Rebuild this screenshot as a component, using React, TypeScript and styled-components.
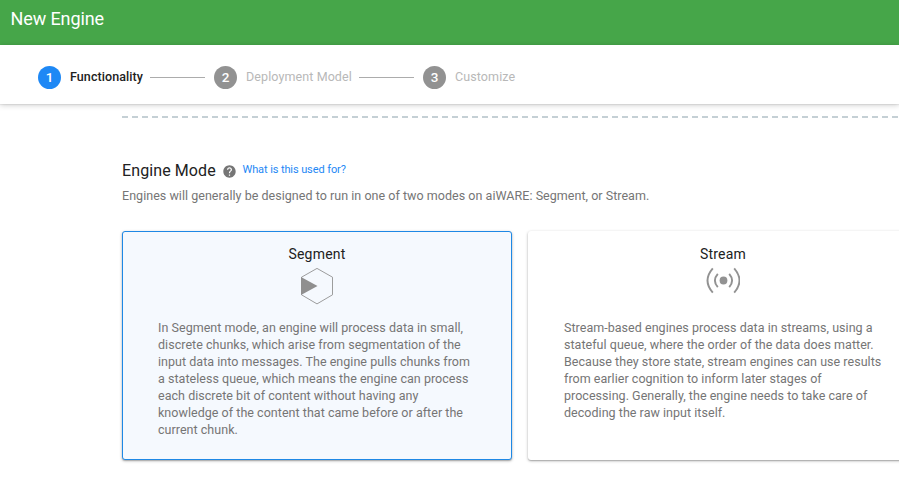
import React from "react";
import styled, { createGlobalStyle } from "styled-components";

const GlobalStyle = createGlobalStyle`
  *, *::before, *::after { box-sizing: border-box; }
  body { margin: 0; background: #fff; font-family: Roboto, "Liberation Sans", sans-serif; }
`;

const Page = styled.div`
  width: 100%;
  height: 478px;
  overflow: hidden;
  display: flex;
  flex-direction: column;
`;

const Header = styled.header`
  flex: none;
  height: 45px;
  padding: 8px 0 0 10.5px;
  background: #46a649;
  color: #fff;
  font-size: 18px;
  line-height: 22px;
  letter-spacing: -0.1px;
`;

const Stepper = styled.nav`
  flex: none;
  height: 59px;
  padding: 5px 0 0 38px;
  display: flex;
  align-items: center;
  background: #fff;
  box-shadow: 0 1px 6px rgba(0, 0, 0, 0.2), 0 1px 1px rgba(0, 0, 0, 0.06);
`;

const StepBadge = styled.span<{ $active?: boolean }>`
  width: 23px;
  height: 23px;
  border-radius: 50%;
  display: grid;
  place-items: center;
  background: ${(p) => (p.$active ? "#1e88f5" : "#929292")};
  color: #fff;
  font-size: 13.5px;
  font-weight: 500;
  line-height: 23px;
`;

const StepLabel = styled.span<{ $active?: boolean; $width: number }>`
  width: ${(p) => p.$width}px;
  margin-left: 9px;
  white-space: nowrap;
  color: ${(p) => (p.$active ? "#212121" : "#b8b8b8")};
  font-size: 12.5px;
  font-weight: ${(p) => (p.$active ? 500 : 400)};
  line-height: 16px;
  letter-spacing: ${(p) => (p.$active ? 0.08 : 0.1)}px;
`;

const StepLine = styled.span`
  width: 55px;
  height: 1px;
  margin: 0 9px 0 7px;
  background: #acacac;
`;

const Content = styled.main`
  padding: 12px 0 0 122px;
`;

const Divider = styled.div`
  height: 2px;
  background: repeating-linear-gradient(90deg, #c5d0d5 0 6px, transparent 6px 10px);
`;

const TitleRow = styled.div`
  display: flex;
  align-items: center;
  height: 22px;
  margin-top: 42px;
`;

const Title = styled.h1`
  width: 100.5px;
  margin: 0;
  white-space: nowrap;
  font-size: 16px;
  font-weight: 400;
  line-height: 22px;
  letter-spacing: 0.1px;
  color: #212121;
`;

const HelpLink = styled.a`
  margin: -2px 0 0 7px;
  font-size: 11px;
  line-height: 16px;
  letter-spacing: -0.1px;
  color: #1e88f5;
`;

const Intro = styled.p`
  margin: 5px 0 0;
  font-size: 12.5px;
  line-height: 17px;
  color: #757575;
  letter-spacing: 0.035px;
  white-space: nowrap;
`;

const Cards = styled.div`
  display: flex;
  gap: 16px;
  margin-top: 27px;
`;

const Card = styled.section<{ $selected?: boolean }>`
  flex: none;
  width: 390px;
  height: 229px;
  padding: 13px 35px 0;
  border: 1px solid ${(p) => (p.$selected ? "#1e88e5" : "transparent")};
  border-radius: 3px;
  background: ${(p) => (p.$selected ? "#f5f9fe" : "#fff")};
  box-shadow: 0 1px 3px rgba(0, 0, 0, 0.3), 0 1px 1px rgba(0, 0, 0, 0.14);
`;

const CardTitle = styled.h2`
  margin: 0;
  text-align: center;
  font-size: 14px;
  font-weight: 400;
  line-height: 18px;
  letter-spacing: 0.2px;
  color: #212121;
`;

const IconSlot = styled.div`
  height: 56px;
  display: flex;
  justify-content: center;
  align-items: flex-start;
`;

const CardText = styled.p`
  margin: 0;
  white-space: pre;
  font-size: 12.5px;
  line-height: 17px;
  letter-spacing: 0.035px;
  color: #757575;
`;

const HelpIcon = () => (
  <svg width="13" height="13" viewBox="1.5 1.5 21 21" fill="#757575">
    <path d="M12 2C6.48 2 2 6.48 2 12s4.48 10 10 10 10-4.48 10-10S17.52 2 12 2zm1 17h-2v-2h2v2zm2.07-7.75l-.9.92C13.45 12.9 13 13.5 13 15h-2v-.5c0-1.1.45-2.1 1.17-2.83l1.24-1.26c.37-.36.59-.86.59-1.41 0-1.1-.9-2-2-2s-2 .9-2 2H8c0-2.21 1.79-4 4-4s4 1.79 4 4c0 .88-.36 1.68-.93 2.25z" />
  </svg>
);

const SegmentIcon = () => (
  <svg width="34" height="42" viewBox="0 0 34 42">
    <path d="M17 5.4 32.5 14.2V31.8L17 40.9 1.5 31.8V14.2Z" fill="none" stroke="#929292" strokeWidth=".9" />
    <path d="M1 14V32L17.5 23Z" fill="#8f8f8f" />
  </svg>
);

const StreamIcon = () => (
  <svg width="34" height="40" viewBox="0 0 34 40" fill="none" stroke="#929292" strokeWidth="1.9">
    <circle cx="17.5" cy="17.5" r="3.9" fill="#929292" stroke="none" />
    <path d="M6.8 5.3Q-3.8 17.5 6.8 29.7M28.2 5.3Q38.8 17.5 28.2 29.7M11.8 10.8Q6 17.5 11.8 24.2M23.2 10.8Q29 17.5 23.2 24.2" />
  </svg>
);

const segmentText = `In Segment mode, an engine will process data in small,
discrete chunks, which arise from segmentation of the
input data into messages. The engine pulls chunks from
a stateless queue, which means the engine can process
each discrete bit of content without having any
knowledge of the content that came before or after the
current chunk.`;

const streamText = `Stream-based engines process data in streams, using a
stateful queue, where the order of the data does matter.
Because they store state, stream engines can use results
from earlier cognition to inform later stages of
processing. Generally, the engine needs to take care of
decoding the raw input itself.`;

export default function App() {
  return (
    <Page>
      <GlobalStyle />
      <Header>New Engine</Header>
      <Stepper>
        <StepBadge $active>1</StepBadge>
        <StepLabel $active $width={73}>Functionality</StepLabel>
        <StepLine />
        <StepBadge>2</StepBadge>
        <StepLabel $width={106}>Deployment Model</StepLabel>
        <StepLine />
        <StepBadge>3</StepBadge>
        <StepLabel $width={62}>Customize</StepLabel>
      </Stepper>
      <Content>
        <Divider />
        <TitleRow>
          <Title>Engine Mode</Title>
          <HelpIcon />
          <HelpLink>What is this used for?</HelpLink>
        </TitleRow>
        <Intro>Engines will generally be designed to run in one of two modes on aiWARE: Segment, or Stream.</Intro>
        <Cards>
          <Card $selected>
            <CardTitle>Segment</CardTitle>
            <IconSlot><SegmentIcon /></IconSlot>
            <CardText>{segmentText}</CardText>
          </Card>
          <Card>
            <CardTitle>Stream</CardTitle>
            <IconSlot><StreamIcon /></IconSlot>
            <CardText>{streamText}</CardText>
          </Card>
        </Cards>
      </Content>
    </Page>
  );
}
